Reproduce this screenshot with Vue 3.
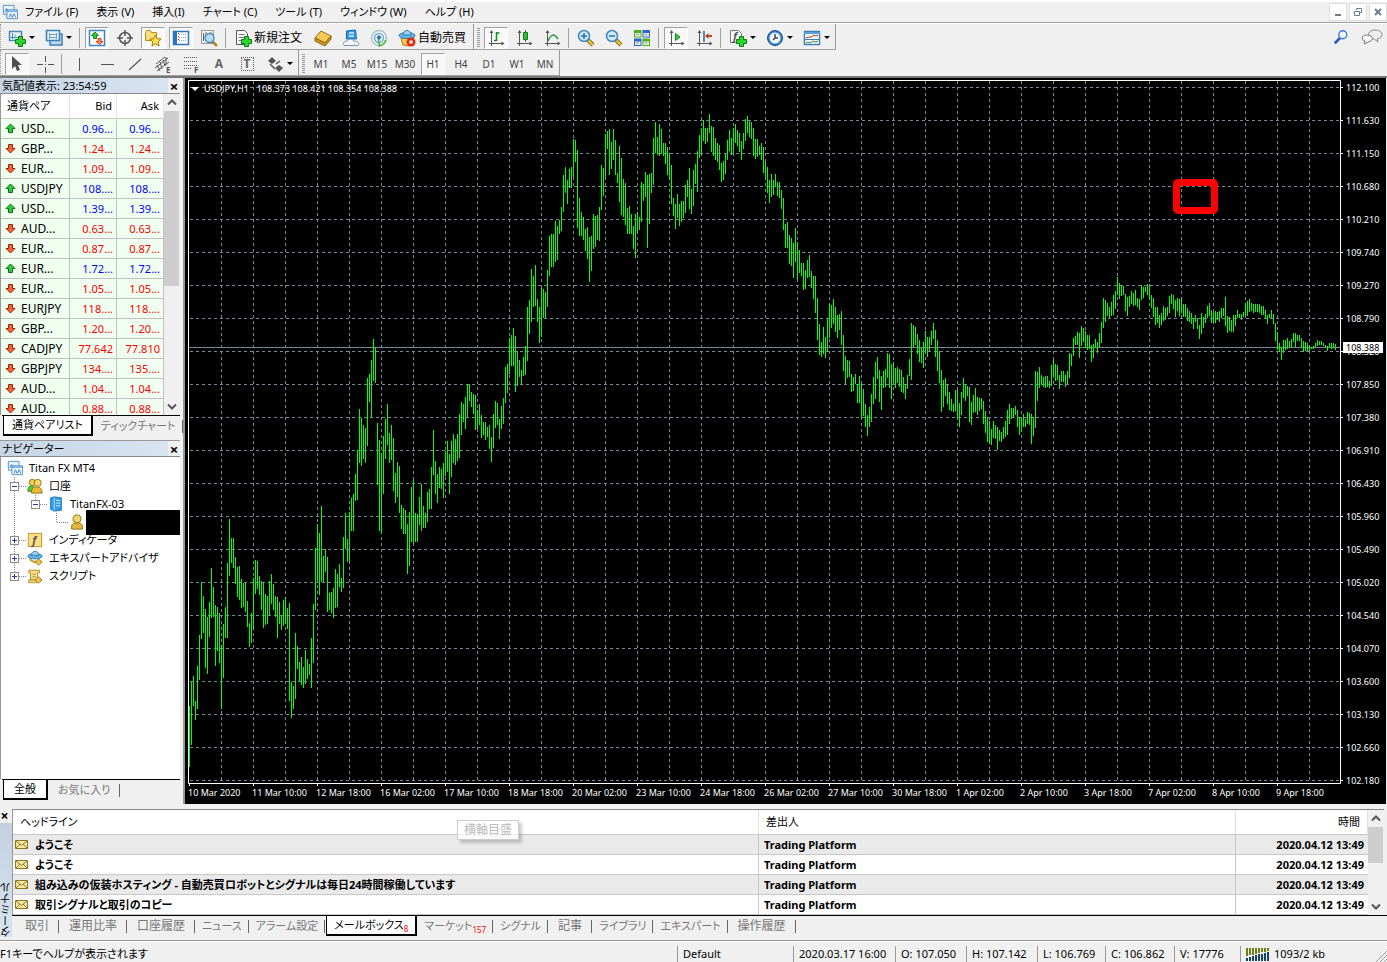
<script setup>
const menus = ['ファイル (F)', '表示 (V)', '挿入(I)', 'チャート (C)', 'ツール (T)', 'ウィンドウ (W)', 'ヘルプ (H)']

const plus = '<path d="M9.500 8.500h4v3h3v4h-3v3h-4v-3h-3v-4h3z" transform="translate(1 -1)" fill="#2fd52f" stroke="#0a7d12"/>'
const axes = '<path d="M4.500 3v14M2 14.500h14" stroke="#555"/><path d="M4.500 1L2.500 4h4zM17.500 14.500l-3-2v4z" fill="#555"/>'
const windows = '<path d="M1.500 1.500h12v10h-12z" fill="#e8f3fc" stroke="#4a8cc4"/><path d="M5.500 6.500h12v10h-12z" fill="#e8f3fc" stroke="#4a8cc4"/><path d="M6 8h11" stroke="#7fb2de" stroke-width="2"/>'
const lens = '<path d="M11 11l5 5" stroke="#8a6a12" stroke-width="4"/><path d="M11.500 11.500l4.500 4.500" stroke="#f2cf4a" stroke-width="2"/><circle cx="7" cy="7" r="5.500" fill="#cfe9fb" stroke="#3f86bd" stroke-width="1.500"/>'
const letter = (c, x, y, size, style = '') => `<text x="${x}" y="${y}" font-size="${size}" font-weight="bold" fill="#555" ${style}>${c}</text>`

const icons = {
  logo: windows + '<path d="M3 9l2-4 2 4M8 15l1.500-4 2 4 2-4 2 4" fill="none" stroke="#3b7fc4"/>',
  newChart: '<path d="M1.500 2.500h12v9h-12z" fill="#eaf4fc" stroke="#4a86b8" stroke-width="1.500"/><path d="M4.500 4v6M2.500 8.500h9M7 5.500v2" stroke="#4a86b8"/>' + plus,
  profiles: '<path d="M5 5h12v11H5z" fill="#b9d8f0" stroke="#3f7fb5" stroke-width="1.500"/><path d="M1.500 1.500h13v10h-13z" fill="#e4f1fb" stroke="#3f7fb5" stroke-width="1.500"/><path d="M4 5.500h8M4 8.500h8M4.500 4v6M11.500 4v6" stroke="#6b9cc4"/>',
  market: '<path d="M1.500 1.500h15v15h-15z" fill="#fff" stroke="#3d86c6" stroke-width="1.500"/><path d="M7 3l3.500 3.500h-2v3h-3v-3h-2z" fill="#35c835" stroke="#138a1d"/><path d="M11.500 15.500l-3.500-3h2v-3h3v3h2z" fill="#ff8a5c" stroke="#d0421a"/>',
  cross: '<circle cx="9" cy="9" r="5.500" fill="none" stroke="#555" stroke-width="1.500"/><path d="M9 1v6M9 11v6M1 9h6M11 9h6" stroke="#555" stroke-width="1.500"/>',
  folderStar: '<path d="M1.500 3.500l1-2h4l1 2h5v8h-11z" fill="#f9dc7b" stroke="#b88d1c"/><path d="M11.500 6l1.700 3.700 4 .4-3 2.700.9 4.200-3.600-2.200-3.600 2.200.9-4.200-3-2.700 4-.4z" fill="#ffe14d" stroke="#a87808"/>',
  data: '<path d="M1.500 2.500h15v13h-15z" fill="#fff" stroke="#2a76bd" stroke-width="1.500"/><path d="M2 3h3v12H2z" fill="#2a76bd"/><path d="M7 5.500h8M7 8.500h8M7 11.500h8" stroke="#7faedb" stroke-dasharray="1 1"/><path d="M6.500 4v9" stroke="#d33" stroke-dasharray="1 2"/>',
  tester: '<path d="M1.500 1.500h12v13h-12z" fill="#f4f4ee" stroke="#999788"/><path d="M3.500 4v8M6 3v5M11 3v3" stroke="#666"/><path d="M12 12l5 5" stroke="#b18924" stroke-width="2.500"/><circle cx="9.500" cy="9" r="4.500" fill="#b5dcf5" stroke="#4a8dc0" stroke-width="1.500"/>',
  order: '<path d="M2.500 1.500h8l3 3v11h-11z" fill="#fff" stroke="#555"/><path d="M4.500 5.500h6M4.500 8.500h6M4.500 11.500h4" stroke="#777"/>' + plus,
  book: '<path d="M1 9l6-7 10 5-6 7z" fill="#f5cb56" stroke="#9a6d0e"/><path d="M1 9v3l10 5 6-7V7l-6 7z" fill="#d59c28" stroke="#8a5e08"/>',
  vps: '<path d="M4.500 2l9-1 1 9h-10z" fill="#2f9be8" stroke="#1767ad"/><path d="M7 4h5M7 7h5" stroke="#d7efff" stroke-width="1.500"/><path d="M2 16.500c-2-3 1-5 3-4 1-3 6-3 7 0 4-1 6 2 4 4z" fill="#f2f5fa" stroke="#7d93ad"/>',
  signal: '<circle cx="9" cy="9" r="7.500" fill="#eef5f6" stroke="#a9c4c9" stroke-width="1.500"/><circle cx="9" cy="9" r="4.500" fill="#e2f2f7" stroke="#7fa9cc" stroke-width="1.500"/><circle cx="9" cy="8.500" r="2" fill="#2b71a9"/><path d="M8.500 10l1 7c4-1 6-4 6-6" fill="none" stroke="#41b53a" stroke-width="1.500"/>',
  auto: '<path d="M3 9l2 7 6 1 5-8z" fill="#f5cb4b" stroke="#a97b12"/><ellipse cx="9" cy="6.500" rx="8" ry="3" fill="#6ab7e4" stroke="#2c78ab"/><path d="M5 6c0-6 8-6 8 0z" fill="#9ad4f2" stroke="#2c78ab"/><circle cx="13" cy="13" r="4.500" fill="#e22a15"/><path d="M11.500 11.500h3v3h-3z" fill="#fff"/>',
  bars: axes + '<path d="M9.500 3v9M9.500 4h3M7 11.500h2.500" stroke="#0d8f1a" stroke-width="1.500"/>',
  candle: axes + '<path d="M10.500 1v12" stroke="#0d7d16"/><path d="M8.500 3.500h4v7h-4z" fill="#2dc23a" stroke="#0d7d16"/>',
  line: axes + '<path d="M5 12c3-7 6-8 10-2" fill="none" stroke="#28923a" stroke-width="1.500"/>',
  zoomIn: lens + '<path d="M4 7h6M7 4v6" stroke="#2c70a8" stroke-width="1.500"/>',
  zoomOut: lens + '<path d="M4 7h6" stroke="#2c70a8" stroke-width="1.500"/>',
  tile: '<path d="M1 1h7.500v7.500H1zM9.500 9.500H17V17H9.500z" fill="#4fae1e"/><path d="M9.500 1H17v7.500H9.500zM1 9.500h7.500V17H1z" fill="#2f62d6"/><path d="M2 4h5.500v3.500H2zM10.500 4H16v3.500h-5.500zM2 12.500h5.500V16H2zM10.500 12.500H16V16h-5.500z" fill="#e9f4e4"/><path d="M3 5.500h3M11.500 5.500h3M3 14h3M11.500 14h3" stroke="#999"/>',
  scroll: axes + '<path d="M8.500 4.500l4.500 3.500-4.500 3.500z" fill="#36c94b" stroke="#0d8f1a"/>',
  shift: axes + '<path d="M9 2v11" stroke="#1b6aa5" stroke-width="1.500"/><path d="M10 7l3.500-3v2H17v2h-3.500v2z" fill="#c8401c"/>',
  indicator: '<path d="M1.500 1.500h8l3 3v9h-11z" fill="#fff" stroke="#777"/>' + letter('f', 4, 11, 11, 'font-style="italic"') + plus,
  clock: '<circle cx="9" cy="9" r="7.500" fill="#2f7fd1" stroke="#164f92"/><circle cx="9" cy="9" r="5.500" fill="#f3f8fc"/><path d="M9 5v4h3M7 11l2-2" fill="none" stroke="#444" stroke-width="1.500"/>',
  template: '<path d="M1.500 2.500h15v13h-15z" fill="#fff" stroke="#3d7fb9" stroke-width="1.500"/><path d="M1 3h16v2H1z" fill="#5aa1dc"/><path d="M1.500 10.500h15" stroke="#3d7fb9"/><path d="M3 9l3-1 2 0 3-2 2 1 2-1" fill="none" stroke="#a3351a"/><path d="M3 14l2-1 2 1 3-2 2 1 3-1" fill="none" stroke="#2c8b38"/>',
  cursor: '<path d="M4 1v13l3-3 2 5 3-1-2-5h4z" fill="#505050"/>',
  crosshair: '<path d="M9.500 1v6M9.500 12v6M1 9.500h6M12 9.500h6M9 9.500h1" stroke="#555"/>',
  vline: '<path d="M9.500 3v13" stroke="#555"/>',
  hline: '<path d="M3 9.500h13" stroke="#555"/>',
  trend: '<path d="M3 15L15 4" stroke="#555" stroke-width="1.200"/>',
  channel: '<path d="M1 13L14 3M3 16L15 7M3 10l3 6M6 7l2 7M9 5l2 6M12 2v8M2 9l9-7" stroke="#555"/>' + letter('E', 12, 18, 8),
  fib: '<path d="M2 2.500h14M2 6.500h14M2 10.500h14M2 13.500h8" stroke="#555" stroke-dasharray="1 1"/>' + letter('F', 12, 18, 8),
  arrows: '<path d="M2 6l4-4 4 4-4 3zM9 13l4-3 4 3-4 4z" fill="#555"/><path d="M4 9l5 5M10 9l4-3" stroke="#555" stroke-width="1.500"/>',
  find: '<path d="M8 10l-6 6" stroke="#2456bd" stroke-width="3"/><circle cx="11" cy="6.500" r="4.500" fill="#f2f8ff" stroke="#3a73d8" stroke-width="1.500"/>',
  up: '<path d="M5.500 1L10 5.500H7.500v4h-4v-4H1z" fill="#2fcb3f" stroke="#0c6e18"/>',
  down: '<path d="M5.500 10L10 5.500H7.500v-4h-4v4H1z" fill="#f4663a" stroke="#9a2408"/>',
  accounts: '<path d="M1 15c0-6 2-6 4-6 4 0 4 3 4 6z" fill="#4fcf3c" stroke="#1c8714"/><circle cx="6" cy="5" r="3.500" fill="#f1cf57" stroke="#8f6a0c"/><path d="M5 17c0-6 2-7 6-7s6 2 6 7z" fill="#e8b836" stroke="#8f6a0c"/><circle cx="12" cy="5.500" r="4" fill="#f6db75" stroke="#8f6a0c"/>',
  user: '<path d="M3 17c-1-6 2-7 6-7s7 1 6 7z" fill="#e3b53a" stroke="#8f6a0c"/><circle cx="9" cy="5.500" r="4.500" fill="#f4d46a" stroke="#8f6a0c"/>',
  server: '<path d="M3 2l4-1 8 1v14l-8 1-4-2z" fill="#2f9de8" stroke="#1668ae"/><path d="M7 2v14" stroke="#bfe3fb"/><path d="M9 5h5M9 8h5M9 11h5" stroke="#d9f1ff"/>',
  fx: '<path d="M1.500 1.500h15v15h-15z" fill="#f9df86" stroke="#b98c1d"/>' + letter('f', 6, 13, 12, 'font-style="italic"'),
  expert: '<path d="M3 10c3 4 6 4 9 3" fill="none" stroke="#caa02e" stroke-width="2"/><ellipse cx="9" cy="7" rx="8" ry="3" fill="#62b2e4" stroke="#2c78ab"/><path d="M5 6c0-6 8-6 8 0z" fill="#9ad4f2" stroke="#2c78ab"/><path d="M13 10l4 3.500-4 3.500-4-3.500z" fill="#edc64e" stroke="#9c7410"/>',
  script: '<path d="M2 2.500h12v3h-2v8H4v-8H2z" fill="#f6df8c" stroke="#ae8418"/><path d="M2 13.500h9v3H2z" fill="#f6df8c" stroke="#ae8418"/><path d="M6 7h4M6 10h4" stroke="#ae8418"/><path d="M13 10l4 3.500-4 3.500-4-3.500z" fill="#edc64e" stroke="#9c7410"/>'
}

const fileTools = [
  { id: 'newChart', label: '新規チャート', drop: true }, { id: 'profiles', label: 'プロファイル', drop: true }, { sep: true },
  { id: 'market', label: '気配値表示', on: true }, { id: 'cross', label: 'データウィンドウ' }, { id: 'folderStar', label: 'ナビゲーター', on: true },
  { id: 'data', label: 'ターミナル', on: true }, { id: 'tester', label: 'ストラテジーテスター' }, { sep: true },
  { id: 'order', label: '新規注文', text: true }, { id: 'book', label: 'メタエディター' }, { id: 'vps', label: 'ホスティング' },
  { id: 'signal', label: 'シグナル' }, { id: 'auto', label: '自動売買', text: true }
]
const chartTools = [
  { id: 'bars', label: 'バーチャート', on: true }, { id: 'candle', label: 'ローソク足' }, { id: 'line', label: 'ラインチャート' }, { sep: true },
  { id: 'zoomIn', label: '拡大' }, { id: 'zoomOut', label: '縮小' }, { id: 'tile', label: '整列' }, { sep: true },
  { id: 'scroll', label: '自動スクロール', on: true }, { id: 'shift', label: 'チャートシフト' }, { sep: true },
  { id: 'indicator', label: 'インディケータ', drop: true }, { id: 'clock', label: '時間足', drop: true }, { id: 'template', label: 'テンプレート', drop: true }
]
const drawTools = [
  { id: 'cursor', label: 'カーソル', on: true }, { id: 'crosshair', label: '十字カーソル' }, { sep: true },
  { id: 'vline', label: '垂直線' }, { id: 'hline', label: '水平線' }, { id: 'trend', label: 'トレンドライン' }, { id: 'channel', label: 'チャネル' },
  { id: 'fib', label: 'フィボナッチ' }, { glyph: 'A', label: 'テキスト' }, { glyph: 'T', label: 'ラベル', boxed: true }, { id: 'arrows', label: '矢印', drop: true }
]
const frames = ['M1', 'M5', 'M15', 'M30', 'H1', 'H4', 'D1', 'W1', 'MN']

const quotes = [
  ['USD...', '0.96...', '0.96...', 1], ['GBP...', '1.24...', '1.24...', 0], ['EUR...', '1.09...', '1.09...', 0],
  ['USDJPY', '108....', '108....', 1], ['USD...', '1.39...', '1.39...', 1], ['AUD...', '0.63...', '0.63...', 0],
  ['EUR...', '0.87...', '0.87...', 0], ['EUR...', '1.72...', '1.72...', 1], ['EUR...', '1.05...', '1.05...', 0],
  ['EURJPY', '118....', '118....', 0], ['GBP...', '1.20...', '1.20...', 0], ['CADJPY', '77.642', '77.810', 0],
  ['GBPJPY', '134....', '135....', 0], ['AUD...', '1.04...', '1.04...', 0], ['AUD...', '0.88...', '0.88...', 0]
]

const tree = [
  { icon: 'logo', text: 'Titan FX MT4', indent: 6, lines: '' },
  { icon: 'accounts', text: '口座', indent: 26, lines: 'M13.500 0V18M18 9.500H26', box: 13, minus: true },
  { icon: 'server', text: 'TitanFX-03', indent: 47, lines: 'M13.500 0V18M34.500 0V9M39 9.500H47', box: 34, minus: true },
  { icon: 'user', text: '', indent: 68, lines: 'M13.500 0V18M55.500 0V9.500H68', masked: true },
  { icon: 'fx', text: 'インディケータ', indent: 26, lines: 'M13.500 0V18M18 9.500H26', box: 13 },
  { icon: 'expert', text: 'エキスパートアドバイザ', indent: 26, lines: 'M13.500 0V18M18 9.500H26', box: 13 },
  { icon: 'script', text: 'スクリプト', indent: 26, lines: 'M13.500 0V9M18 9.500H26', box: 13 }
]

const mails = [
  'ようこそ', 'ようこそ',
  '組み込みの仮装ホスティング - 自動売買ロボットとシグナルは毎日24時間稼働しています',
  '取引シグナルと取引のコピー'
]
const tabs = [
  { t: '取引' }, { t: '運用比率' }, { t: '口座履歴' }, { t: 'ニュース', kana: true }, { t: 'アラーム設定', kana: true }, { t: 'メールボックス', n: 8, on: true, kana: true },
  { t: 'マーケット', n: 157, kana: true }, { t: 'シグナル', kana: true }, { t: '記事' }, { t: 'ライブラリ', kana: true }, { t: 'エキスパート', kana: true }, { t: '操作履歴' }
]

const prices = ['112.100', '111.630', '111.150', '110.680', '110.210', '109.740', '109.270', '108.790', '108.320', '107.850', '107.380',
  '106.910', '106.430', '105.960', '105.490', '105.020', '104.540', '104.070', '103.600', '103.130', '102.660', '102.180']
const dates = ['10 Mar 2020', '11 Mar 10:00', '12 Mar 18:00', '16 Mar 02:00', '17 Mar 10:00', '18 Mar 18:00', '20 Mar 02:00', '23 Mar 10:00',
  '24 Mar 18:00', '26 Mar 02:00', '27 Mar 10:00', '30 Mar 18:00', '1 Apr 02:00', '2 Apr 10:00', '3 Apr 18:00', '7 Apr 02:00', '8 Apr 10:00', '9 Apr 18:00']

// High and low offsets of each hourly bar, in alternation; each series has its own unit.
const march = [1402,1538,1348,1490,1335,1403,1391,1433,1313,1409,1243,1343,1124,1253,1156,1239,1185,1316,1202,1330,1169,1247,1093,1204,1135,1202,1176,1312,1180,1278,1194,1307,1265,1409,1219,1339,1180,1249,1082,1249,
983,1112,1026,1083,1026,1094,1068,1129,1091,1157,1089,1164,1118,1182,1127,1180,1127,1191,1167,1225,1216,1271,1194,1260,1116,1231,1075,1151,1077,1140,1111,1153,1122,1188,1125,1227,1151,1220,1156,1218,
1122,1199,1107,1174,1129,1187,1156,1202,1158,1249,1169,1218,1200,1233,1165,1224,1158,1218,1182,1229,1172,1390,1348,1430,1357,1408,1239,1386,1268,1319,1304,1347,1292,1356,1315,1363,1277,1354,1297,1342,
1308,1332,1250,1361,1173,1307,1048,1188,995,1122,1015,1154,954,1124,1066,1126,1051,1101,1068,1191,1149,1188,1147,1193,1138,1206,1095,1182,1107,1180,1084,1135,1116,1146,1023,1138,970,1051,1029,1079,
968,1079,936,1010,927,1010,883,943,829,941,738,857,757,865,773,849,780,857,668,820,659,721,628,757,580,675,598,678,768,908,806,1011,835,1016,797,927,759,849,726,818,
791,857,773,851,803,920,881,948,856,935,865,971,952,1006,958,1018,963,1018,995,1106,968,1088,912,1034,896,1037,970,1034,972,1034,934,997,904,1011,954,1004,970,1004,923,991,
916,961,867,961,784,885,853,927,883,948,867,914,871,916,857,936,831,886,809,878,838,927,809,889,793,858,804,862,793,853,748,847,721,795,726,767,710,782,680,756,
682,718,699,732,703,748,706,784,739,782,726,773,750,802,766,796,766,806,777,800,773,826,800,856,748,824,719,780,724,773,759,804,730,782,712,771,643,724,636,701,
578,658,571,641,556,641,573,698,607,685,628,665,650,682,620,662,596,660,508,629,493,569,423,542,439,508,414,506,491,542,508,589,466,576,468,533,475,533,426,508,
349,439,346,420,346,418,316,407,328,403,314,345,284,339,213,296,195,254,225,277,199,241,195,241,132,217,134,183,157,332,265,349,296,349,307,358,334,383,329,402,
352,452,349,428,300,379,305,374,302,358,284,360,190,291,197,260,122,220,114,154,110,213,139,199,110,180,134,213,208,230,148,273,175,302,222,307,231,325,286,346,
282,344,300,346,328,378,300,399,296,342,307,337,228,318,233,272,206,262,212,376,210,323,208,254,130,235,94,164,128,168,99,170,110,166,142,170,142,188,150,213,
164,222,190,277,264,304,277,333,255,308,277,326,272,318,270,308,235,298,224,263,197,290,244,301,202,282,188,233,160,252,123,175,108,166,90,137,108,144,108,139,
76,119,103,161,105,170,130,179,141,183,146,202,186,228,181,224,166,210,134,179,112,159,130,168,107,164,99,142,112,148,119,161]
const april = [183,240,159,207,117,183,108,158,122,170,126,176,144,228,177,236,177,230,197,224,189,240,201,279,243,291,261,339,300,369,282,351,300,345,282,321,306,348,306,354,330,387,354,450,432,504,426,504,
465,552,474,558,489,594,444,546,486,600,510,579,548,588,549,630,570,627,540,594,525,591,573,624,588,657,588,699,654,780,732,825,786,831,741,822,771,834,717,816,672,774,675,744,657,732,681,756,
705,774,702,750,693,795,765,873,828,912,840,894,843,891,882,936,891,933,882,912,912,969,888,969,909,1017,927,1008,972,1041,1005,1068,981,1041,942,1026,891,972,846,957,831,897,870,966,888,990,873,924,
867,921,819,894,822,924,852,957,846,909,864,924,861,909,867,921,870,936,891,939,912,957,885,927,837,888,729,900,735,801,741,795,762,822,780,846,804,849,786,864,753,819,771,831,771,813,753,795,
729,777,750,831,780,873,813,909,870,996,900,981,894,948,912,972,936,990,957,993,972,996,930,993,930,1014,969,1041,936,1005,894,954,912,963,918,948,921,1026,966,1035,945,999,924,996,951,1005,954,993,
954,987,963,1032,993,1059,1011,1086,1023,1089,1047,1095,1023,1074,1035,1077,1041,1110,1050,1083,1056,1086,1041,1077,1023,1071,990,1065,972,1032,984,1017,984,1011,978,1005,990,1041,1011,1065,1014,1056,1002,1041,1017,1041,996,1032,
999,1035,1002,1092,1011,1068,873,1044,876,963,861,924,885,915,891,921,888,924,888,921,903,924,855,918,840,888,852,903,855,900,885,927,873,906,873,906,885,921,873,912,819,894,822,858,774,828,768,795,
756,795,759,834,738,798,744,786,753,804,765,810,765,807,795,846,792,834,777,804,786,819,759,804,726,789,654,744,660,726,669,708,681,714,666,708,645,705,633,687,591,645,609,657,615,648,618,645,
642,693,651,708,648,681,633,672,639,678,630,675,654,681,657,690,615,660,621,654,621,636,612,645,612,657,645,684,654,711,681,735,681,729,705,744,699,735,678,723,684,720,681,708,648,699,642,672,
645,687,660,711,654,693,657,708,654,699,672,711,672,711,684,723,693,726,699,732,714,747,705,726,714,747,735,777,699,762,711,744,702,729,678,714,669,708,690,729,696,729,693,729,696,720,693,726,
684,714,684,708,651,738,708,759,711,753,720,756,705,756,705,738,690,714,702,714,702,720,696,711,669,708,663,708,657,696,669,693,672,699,672,696,672,696,672,699,678,705,678,705,690,717,705,732,
702,714,690,714,702,732,729,783,756,810,789,816,801,840,780,819,780,810,774,807,783,804,777,801,759,786,759,801,765,783,765,783,774,801,783,816,786,813,789,813,795,816,801,807,798,807,789,804,
780,798,783,795,783,795,789,798,795,801,798,813,789,804,789,807,789,804,792,810]

const toPath = (series, unit, start) => {
  let d = ''
  for (let i = 0; i < series.length; i += 2) {
    d += `M${start + i + 1.5} ${Math.round(series[i] / unit)}V${Math.round(series[i + 1] / unit)}`
  }
  return d
}
const barPath = toPath(march, 2.24, 0) + toPath(april, 3, march.length)
const rows = prices.map((_, k) => 7.5 + 33 * k)
const gridPath = rows.map(y => `M2 ${y}H1152`).join('') + Array.from({ length: 35 }, (_, k) => `M${33.5 + 32 * k} 1V702`).join('')
const tickPath = rows.map(y => `M1153 ${y}h2`).join('') + dates.map((_, k) => `M${1.5 + 64 * k} 704v2`).join('')
const status = [['2020.03.17 16:00', 'w102'], ['O: 107.050', 'w71'], ['H: 107.142', 'w71'], ['L: 106.769', 'w68'], ['C: 106.862', 'w69'], ['V: 17776', 'w66']]
</script>

<template>
  <div class="app">
    <header class="menubar">
      <svg class="ic16" viewBox="0 0 18 18" v-html="icons.logo"></svg>
      <nav class="menus"><button v-for="m in menus" :key="m" type="button">{{ m }}</button></nav>
      <div class="winbtns">
        <button type="button" aria-label="最小化"><svg viewBox="0 0 14 14"><path d="M4 10h6" stroke="#6d7b8d" stroke-width="2" /></svg></button>
        <button type="button" aria-label="元に戻す"><svg viewBox="0 0 14 14"><path d="M5.500 5V3.500h5v4H9M3.500 6.500h5v4h-5z" fill="none" stroke="#6d7b8d" /></svg></button>
        <button type="button" aria-label="閉じる"><svg viewBox="0 0 14 14"><path d="M4 4l6 6M10 4l-6 6" stroke="#6d7b8d" stroke-width="2" /></svg></button>
      </div>
    </header>

    <div class="bar">
      <div class="group first">
        <template v-for="(t, i) in fileTools" :key="i">
          <i v-if="t.sep" class="sep"></i>
          <button v-else type="button" class="tool" :class="{ on: t.on, drop: t.drop, wide: t.text }" :aria-label="t.label">
            <svg class="ic" viewBox="0 0 18 18" v-html="icons[t.id]"></svg><span v-if="t.text">{{ t.label }}</span><b v-if="t.drop" class="caret"></b>
          </button>
        </template>
      </div>
      <div class="group">
        <i class="grip"></i>
        <template v-for="(t, i) in chartTools" :key="i">
          <i v-if="t.sep" class="sep"></i>
          <button v-else type="button" class="tool" :class="{ on: t.on, drop: t.drop }" :aria-label="t.label">
            <svg class="ic" viewBox="0 0 18 18" v-html="icons[t.id]"></svg><b v-if="t.drop" class="caret"></b>
          </button>
        </template>
      </div>
      <div class="right">
        <button type="button" aria-label="検索"><svg class="ic16" viewBox="0 0 18 18" v-html="icons.find"></svg></button>
        <button type="button" aria-label="チャット">
          <svg class="chat" viewBox="0 0 22 16"><path d="M14 1c9 0 9 8 2 9l1 3-4-3c-7 0-8-9 1-9z" fill="#eee" stroke="#8a8a8a" /><path d="M6 6c7 0 7 6 1 7l-4 2 1-3C0 11 0 6 6 6z" fill="#fafafa" stroke="#777" /></svg>
        </button>
      </div>
    </div>

    <div class="bar">
      <div class="group first">
        <template v-for="(t, i) in drawTools" :key="i">
          <i v-if="t.sep" class="sep"></i>
          <button v-else type="button" class="tool" :class="{ on: t.on, drop: t.drop }" :aria-label="t.label">
            <span v-if="t.glyph" class="glyph" :class="{ boxed: t.boxed }">{{ t.glyph }}</span>
            <svg v-else class="ic" viewBox="0 0 18 18" v-html="icons[t.id]"></svg><b v-if="t.drop" class="caret"></b>
          </button>
        </template>
      </div>
      <div class="group">
        <i class="grip"></i>
        <button v-for="f in frames" :key="f" type="button" class="tool tf" :class="{ on: f === 'H1' }">{{ f }}</button>
      </div>
    </div>

    <main class="work">
      <aside class="side">
        <section class="watch">
          <h2 class="title"><span>気配値表示: 23:54:59</span><button type="button" aria-label="閉じる">×</button></h2>
          <div class="pane">
            <table class="quotes">
              <thead><tr><th>通貨ペア</th><th>Bid</th><th>Ask</th></tr></thead>
              <tbody>
                <tr v-for="(q, i) in quotes" :key="i" :class="q[3] ? 'up' : 'down'">
                  <td><svg class="ar" viewBox="0 0 11 11" v-html="q[3] ? icons.up : icons.down"></svg>{{ q[0] }}</td><td>{{ q[1] }}</td><td>{{ q[2] }}</td>
                </tr>
              </tbody>
            </table>
            <div class="scroll">
              <svg viewBox="0 0 16 16"><path d="M4 10l4-4 4 4" /></svg><i class="thumb tall"></i>
              <svg class="end" viewBox="0 0 16 16"><path d="M4 6l4 4 4-4" /></svg>
            </div>
          </div>
          <div class="tabs"><button type="button" class="tab on kana">通貨ペアリスト</button><button type="button" class="tab kana">ティックチャート</button></div>
        </section>
        <section class="navi">
          <h2 class="title"><span>ナビゲーター</span><button type="button" aria-label="閉じる">×</button></h2>
          <ul class="tree">
            <li v-for="(n, i) in tree" :key="i">
              <svg :width="n.indent" height="18">
                <path :d="n.lines" fill="none" stroke="#888" stroke-dasharray="1 1" />
                <g v-if="n.box"><rect :x="n.box - 4 + 0.5" y="5.500" width="8" height="8" fill="#fff" stroke="#8c8c8c" /><path :d="`M${n.box - 2} 9.500h5` + (n.minus ? '' : `M${n.box + 0.5} 7v5`)" stroke="#25418c" /></g>
              </svg>
              <svg class="ic16" viewBox="0 0 18 18" v-html="icons[n.icon]"></svg>
              <span>{{ n.text }}</span><i v-if="n.masked" class="mask"></i>
            </li>
          </ul>
          <div class="tabs"><button type="button" class="tab on">全般</button><button type="button" class="tab">お気に入り</button></div>
        </section>
      </aside>

      <section class="chart">
        <svg class="plot" viewBox="0 0 1155 706" preserveAspectRatio="none">
          <path :d="gridPath" fill="none" stroke="#778899" stroke-dasharray="3 3" />
          <path d="M1 267.500H1152" stroke="#778899" />
          <path :d="barPath" fill="none" stroke="#00ff00" />
          <path d="M0.500 703.500V0.500H1152.500V703.500Z" fill="none" stroke="#fff" />
          <path :d="tickPath" stroke="#fff" />
        </svg>
        <div class="prices"><span v-for="p in prices" :key="p">{{ p }}</span><b class="last">108.388</b></div>
        <div class="dates"><span v-for="d in dates" :key="d">{{ d }}</span></div>
        <div class="caption"><i></i><span>USDJPY,H1</span><span>108.373 108.421 108.354 108.388</span></div>
        <div class="marker"></div>
      </section>
    </main>

    <section class="terminal">
      <div class="strip"><button type="button" aria-label="閉じる">×</button><span>ターミナル</span></div>
      <div class="tbody">
        <div class="mailwrap">
          <table class="mails">
            <thead><tr><th>ヘッドライン</th><th>差出人</th><th>時間</th></tr></thead>
            <tbody>
              <tr v-for="(m, i) in mails" :key="i">
                <td><div class="subject"><svg class="env" viewBox="0 0 13 11"><path d="M.5 1.500h12v8H.5z" fill="#f7e6a4" stroke="#8d7420" /><path d="M1 2l5.500 4.500L12 2M1 9l4-4M12 9L8 5" fill="none" stroke="#8d7420" /></svg>{{ m }}</div></td>
                <td>Trading Platform</td><td>2020.04.12 13:49</td>
              </tr>
            </tbody>
          </table>
          <div class="scroll">
            <svg viewBox="0 0 16 16"><path d="M4 10l4-4 4 4" /></svg><i class="thumb"></i>
            <svg class="end" viewBox="0 0 16 16"><path d="M4 6l4 4 4-4" /></svg>
          </div>
        </div>
        <div class="tabs long">
          <button v-for="t in tabs" :key="t.t" type="button" class="tab" :class="{ on: t.on, kana: t.kana }">{{ t.t }}<sub v-if="t.n">{{ t.n }}</sub></button>
        </div>
      </div>
      <div class="tip">横軸目盛</div>
    </section>

    <footer class="status">
      <span class="help">F1キーでヘルプが表示されます</span>
      <span class="cell w116">Default</span>
      <span v-for="s in status" :key="s[0]" class="cell" :class="s[1]">{{ s[0] }}</span>
      <span class="cell net">
        <svg width="24" height="14"><path d="M1 1v8M4 1v7M7 1v7M10 1v6M13 1v5M16 1v4M19 1v4M22 1v3" stroke="#6c7f13" stroke-width="2" /><path d="M1 14v-3M4 14v-4M7 14v-5M10 14V8M13 14V7M16 14V7M19 14V6M22 14V5" stroke="#154563" stroke-width="2" /></svg>
        1093/2 kb
      </span>
      <svg class="size" viewBox="0 0 12 12"><path d="M1 12L12 1M5 12l7-7M9 12l3-3" stroke="#999" /></svg>
    </footer>
  </div>
</template>

<style>
body { margin: 0; background: #f0f0f0; }
</style>

<style scoped>
.app { min-height: 100vh; display: flex; flex-direction: column; background: #f0f0f0; color: #000; font: 12px/16px "Noto Sans", "Noto Sans CJK JP", sans-serif; font-feature-settings: "palt"; overflow: hidden; }
.app * { box-sizing: border-box; }
button { font: inherit; color: inherit; background: none; border: 0; padding: 0; margin: 0; white-space: nowrap; font-feature-settings: inherit; }
svg { display: block; flex: none; }
.ic { width: 18px; height: 18px; }
.ic16 { width: 16px; height: 16px; }

.menubar { display: flex; align-items: center; height: 24px; border-top: 2px solid #fff; border-bottom: 1px solid #fff; box-shadow: inset 0 -1px #a0a0a0; padding: 0 0 1px 2px; }
.menus { display: flex; gap: 18px; margin-left: 7px; font-size: 11px; flex: 1; }
.winbtns { display: flex; gap: 2px; }
.winbtns button { width: 18px; height: 18px; background: #fff; border: 1px solid #ddd; display: grid; place-items: center; }
.winbtns svg { width: 14px; height: 14px; }

.bar { display: flex; height: 26px; }
.group { display: flex; align-items: center; gap: 4px; padding: 2px 2px 0; border-right: 1px solid #999; border-bottom: 1px solid #a0a0a0; }
.group.first { border-left: 1px dotted #999; padding-left: 4px; }
.tool { width: 24px; height: 22px; display: flex; align-items: center; justify-content: center; flex: none; }
.tool.on { border: 1px solid #a0a0a0; border-right-color: #fff; border-bottom-color: #fff; background: #f9f9f9; }
.tool.drop { width: 33px; justify-content: space-between; padding: 0 3px; }
.tool.wide { width: 76px; justify-content: flex-start; padding-left: 3px; gap: 2px; }
.caret { border: 3px solid transparent; border-top-color: #000; border-bottom: 0; }
.sep { width: 1px; height: 20px; background: #a0a0a0; margin-right: 1px; }
.grip { width: 3px; height: 19px; margin-left: 1px; background: repeating-linear-gradient(#999 0 1px, #f0f0f0 1px 2px); }
.tf { font-size: 10px; color: #444; }
.glyph { font-size: 12px; font-weight: bold; color: #666; }
.glyph.boxed { border: 1px dotted #555; width: 13px; line-height: 12px; text-align: center; }
.right { margin-left: auto; display: flex; align-items: center; gap: 12px; padding-right: 4px; }
.chat { width: 22px; height: 16px; }

.work { flex: 1; display: flex; border-top: 2px solid #777; min-height: 0; }
.side { width: 185px; flex: none; display: flex; flex-direction: column; border-right: 2px solid #999; padding-right: 3px; }
.title { display: flex; align-items: center; height: 16px; margin: 0; font: inherit; font-size: 11px; line-height: 15px; border-bottom: 1px solid #888; }
.title span { flex: 1; padding-left: 2px; background: linear-gradient(90deg, #c6d4e4, #d8e4f2); }
.title button { width: 12px; line-height: 14px; font-size: 15px; font-weight: bold; }
.watch { height: 363px; border-bottom: 1px solid #999; display: flex; flex-direction: column; }
.pane { display: flex; flex: 1; min-height: 0; overflow: hidden; background: #fff; border-left: 1px solid #999; }
.quotes { border-collapse: separate; border-spacing: 0; table-layout: fixed; width: 163px; height: max-content; }
.quotes th { font-weight: normal; font-size: 11px; text-align: right; height: 25px; padding: 0 4px; border-right: 1px solid #e5e5e5; border-bottom: 1px solid #c8c8c8; }
.quotes th:first-child { text-align: left; width: 69px; padding-left: 6px; }
.quotes th:nth-child(2) { width: 47px; }
.quotes td { height: 20px; padding: 0 3px 0 0; font-size: 11px; line-height: 18px; text-align: right; background: #f0fff0; border-right: 1px solid #c0c0c0; border-bottom: 1px solid #c0c0c0; white-space: nowrap; }
.quotes td:first-child { display: flex; align-items: center; gap: 5px; padding-left: 4px; color: #000; font-size: 12px; }
.up td { color: #00f; }
.down td { color: #f00; }
.ar { width: 11px; height: 11px; }
.scroll { width: 16px; background: #f0f0f0; display: flex; flex-direction: column; flex: none; }
.scroll svg { width: 16px; height: 17px; fill: none; stroke: #555; stroke-width: 2px; }
.scroll .end { margin-top: auto; }
.thumb { height: 36px; width: 15px; background: #cdcdcd; }
.thumb.tall { height: 175px; }
.tabs { display: flex; height: 25px; border-top: 1px solid #000; margin-left: 2px; align-items: flex-start; flex: none; }
.tab { height: 20px; padding: 0 10px; color: #777; font-size: 11px; line-height: 18px; position: relative; }
.tab.kana { padding: 0 8px; }
.tab:not(.on)::after { content: ""; position: absolute; right: 0; top: 4px; height: 13px; border-right: 1px solid #666; }
.tab.on { background: #fff; color: #000; border: 1px solid #000; border-top: 0; border-right-width: 2px; border-bottom-width: 2px; margin-left: 1px; }
.navi { flex: 1; display: flex; flex-direction: column; min-height: 0; }
.tree { list-style: none; margin: 0; padding: 2px 0 0; flex: 1; background: #fff; border-left: 1px solid #999; font-size: 11px; }
.tree li { display: flex; align-items: center; height: 18px; position: relative; }
.tree span { margin-left: 6px; white-space: nowrap; }
.mask { position: absolute; left: 85px; right: 0; top: -3px; height: 25px; background: #000; z-index: 1; }

.chart { flex: 1; min-width: 0; margin-right: 1px; background: #000; color: #fff; display: grid; grid-template-columns: 1fr 43px; grid-template-rows: 1fr 18px; padding: 2px 0 0 3px; position: relative; font-size: 9px; line-height: 12px; }
.plot { width: 100%; height: 100%; min-height: 0; }
.prices { display: flex; flex-direction: column; justify-content: space-between; padding: 2px 0 0 3px; margin-bottom: -1px; position: relative; }
.last { position: absolute; left: 0; right: 3px; top: 262px; padding-left: 3px; background: #fff; color: #000; font-weight: normal; line-height: 11px; }
.dates { display: grid; grid-template-columns: repeat(18, 1fr); white-space: nowrap; margin-right: 3px; padding-top: 1px; }
.caption { position: absolute; left: 6px; top: 5px; display: flex; gap: 5px; align-items: center; }
.caption span + span { margin-left: 3px; }
.caption i { border: 4px solid transparent; border-top-color: #fff; border-bottom: 0; }
.marker { position: absolute; right: 168px; top: 101px; width: 45px; height: 35px; border: 7px solid #f00; border-radius: 5px; }

.terminal { display: flex; position: relative; height: 136px; flex: none; padding-top: 4px; }
.strip { width: 12px; display: flex; flex-direction: column; overflow: hidden; }
.strip button { height: 15px; line-height: 14px; font-size: 14px; font-weight: bold; width: 9px; }
.strip span { flex: 1; background: linear-gradient(#d8e4f2, #c2d0e0); writing-mode: vertical-rl; transform: rotate(180deg); font-size: 11px; line-height: 12px; margin-bottom: 3px; }
.tbody { flex: 1; min-width: 0; }
.mailwrap { display: flex; height: 106px; background: #fff; border-left: 1px solid #999; border-top: 1px solid #888; overflow: hidden; margin-right: 3px; margin-top: 1px; }
.mails { flex: 1; border-collapse: separate; border-spacing: 0; table-layout: fixed; height: max-content; font-size: 11px; }
.mails th { font-weight: normal; height: 25px; text-align: left; padding: 0 7px; border-right: 1px solid #e0e0e0; border-bottom: 1px solid #c8c8c8; }
.mails th:nth-child(2) { width: 477px; }
.mails th:nth-child(3) { width: 132px; text-align: right; }
.mails td { height: 20px; padding: 0 5px; line-height: 18px; font-weight: bold; border-right: 1px solid #c8c8c8; border-bottom: 1px solid #c8c8c8; white-space: nowrap; }
.mails td:first-child { padding-left: 2px; }
.subject { display: flex; align-items: center; gap: 7px; height: 19px; }
.mails td:last-child { text-align: right; padding-right: 4px; border-right: 0; }
.mails tbody tr:nth-child(odd) { background: #eaeaea; }
.env { width: 13px; height: 11px; }
.tabs.long { margin-left: 0; padding-left: 3px; }
.long .tab { font-size: 12px; }
.long .tab.kana { font-size: 11px; padding: 0 7px; }
sub { color: #f00; font-size: 8px; line-height: 0; }
.tip { position: absolute; left: 457px; top: 16px; padding: 1px 6px; border: 1px solid #ccc; background: #fffc; color: #bbb; box-shadow: 3px 3px 3px #0003; line-height: 16px; }

.status { display: flex; align-items: center; height: 22px; border-top: 1px solid #999; box-shadow: inset 0 1px #fff; font-size: 11px; padding-top: 4px; position: relative; }
.help { flex: 1; }
.cell { border-left: 1px solid #999; padding-left: 5px; white-space: nowrap; }
.w116 { width: 116px; }
.w102 { width: 102px; }
.w71 { width: 71px; }
.w68 { width: 68px; }
.w69 { width: 69px; }
.w66 { width: 66px; }
.net { width: 147px; display: flex; align-items: center; gap: 4px; }
.size { position: absolute; right: 0; bottom: 0; width: 12px; height: 12px; }
</style>
